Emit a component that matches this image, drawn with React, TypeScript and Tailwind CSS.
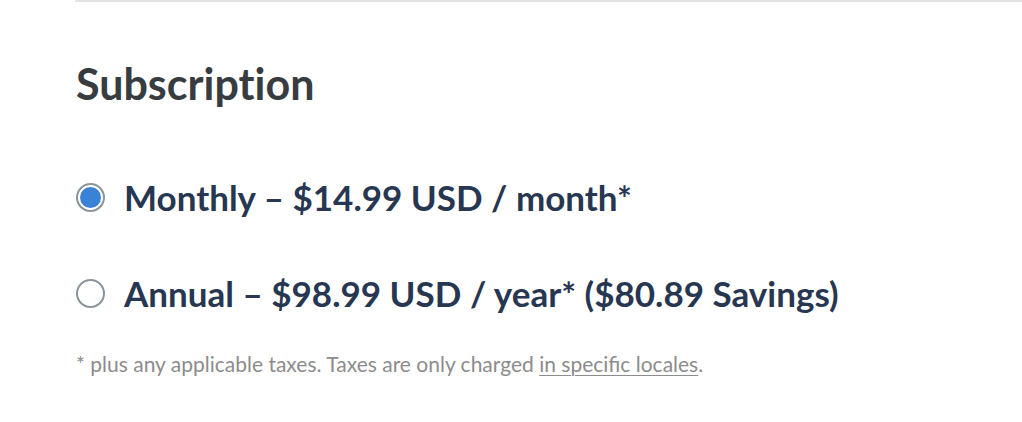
import React from "react";

function Radio({ checked }: { checked: boolean }) {
  return (
    <span className="flex h-[29px] w-[29px] shrink-0 items-center justify-center rounded-full border-2 border-[#8a949c] bg-white">
      {checked && <span className="h-[21px] w-[21px] rounded-full bg-[#3a82d6]" />}
    </span>
  );
}

export default function App() {
  return (
    <div className="h-[422px] w-[1022px] bg-white pl-[75px]" style={{ fontFamily: "Lato, 'Noto Sans', sans-serif" }}>
      <div className="h-[2px] w-full bg-[#e3e3e3]" />
      <div className="pl-px">
        <h2 className="mt-[58px] text-[43px] font-bold leading-[48px] text-[#373c41] [font-variant-ligatures:none]">Subscription</h2>
        <div className="mt-[68px] flex flex-col gap-[54px]">
          <label className="flex items-center gap-[19px]">
            <Radio checked />
            <span className="text-[35px] font-bold leading-[42px] text-[#283751]">Monthly – $14.99 USD / month*</span>
          </label>
          <label className="flex items-center gap-[19px]">
            <Radio checked={false} />
            <span className="text-[35px] font-bold leading-[42px] text-[#283751]">Annual – $98.99 USD / year* ($80.89 Savings)</span>
          </label>
        </div>
        <p className="mt-[36px] text-[21px] leading-[28px] text-[#8c8c8c]">
          * plus any applicable taxes. Taxes are only charged <span className="underline decoration-1 underline-offset-[3px]">in specific locales</span>.
        </p>
      </div>
    </div>
  );
}
